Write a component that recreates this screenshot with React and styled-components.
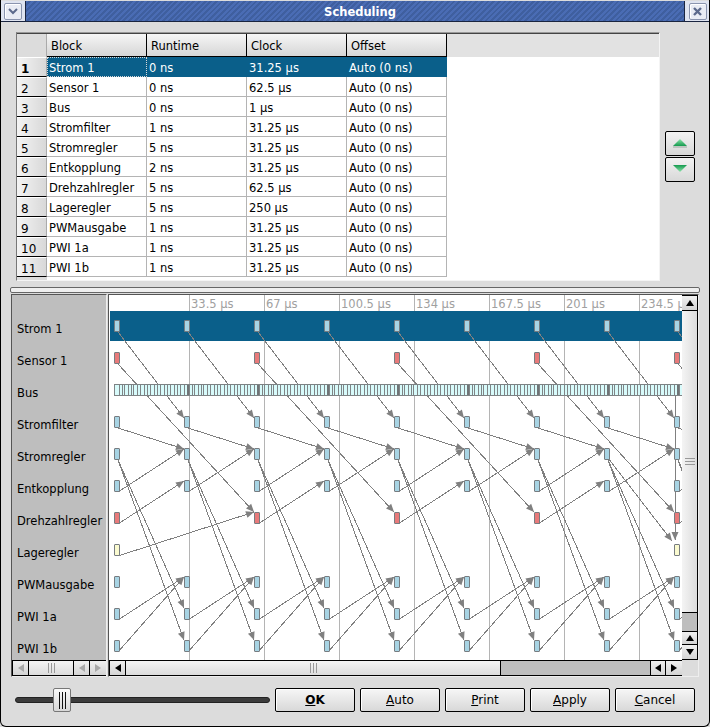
import React from 'react';
import styled, { createGlobalStyle } from 'styled-components';

const Global = createGlobalStyle`
  html, body { margin: 0; padding: 0; background: #dcdcdc; }
  body { font-family: "DejaVu Sans", sans-serif; font-size: 11.5px; color: #000; }
`;

const Window = styled.div`
  position: relative; box-sizing: border-box; width: 710px; height: 727px; overflow: hidden;
  background: #dcdcdc; display: flex; flex-direction: column;
  border: 1px solid #000; border-top: none; border-radius: 0 0 6px 6px;
`;
const TitleBar = styled.div`
  flex: none; height: 21px; box-sizing: border-box; margin: 1px -1px 0; display: flex; align-items: stretch;
  border-bottom: 1px solid #1a2540;
`;
const TitleStripes = styled.div`
  flex: 1; display: flex; align-items: center; justify-content: center; padding: 2px 0 0 10px;
  color: #fff; font-weight: bold; font-size: 11.5px;
  background: repeating-linear-gradient(135deg, #4a6cb4 0 2px, #3f5f9f 2px 4px);
  border-left: 1px solid #1a2540; border-right: 1px solid #1a2540;
`;
const WinBtnWrap = styled.div`
  width: ${p => p.$w}px; background: #dfe4f0; display: flex; align-items: center; justify-content: center;
`;
const WinBtn = styled.div`
  width: 16px; height: 15px; border: 1px solid #8a94ae; border-radius: 2px; background: #e9ecf4;
  display: flex; align-items: center; justify-content: center; box-shadow: inset 1px 1px 0 #fff;
`;
const Body = styled.div`
  flex: 1; display: flex; flex-direction: column; padding: 10px 10px 0 10px; min-height: 0;
`;
const TopRow = styled.div`
  display: flex; height: 249px; flex: none; padding-left: 5px;
`;
const TableFrame = styled.div`
  box-sizing: border-box; width: 644px; height: 249px; background: #fff; padding-top: 1px;
  border-top: 1px solid #999; box-shadow: inset 0 1px 0 #444;
  border-left: 1px solid #777; border-right: 1px solid #f4f4f4; border-bottom: 1px solid #f4f4f4;
`;
const HeadRow = styled.div`
  display: flex; height: 23px; background: #e2e2e2;
`;
const Corner = styled.div` box-sizing: border-box; width: 30px; background: #dcdcdc; border-right: 1px solid #aaa; `;
const HeadCell = styled.div`
  box-sizing: border-box; width: 100px; height: 23px; padding: 3px 4px 0 4px; line-height: 18px;
  background: linear-gradient(#f6f6f6, #d6d6d6); border-right: 1px solid #000; border-bottom: 1px solid #000;
`;
const Row = styled.div` display: flex; height: 20px; `;
const RowHead = styled.div`
  box-sizing: border-box; width: 30px; height: 20px; padding: 2px 0 0 4px; line-height: 18px; font-size: 12px;
  background: linear-gradient(90deg, #f4f4f4, #d8d8d8);
  border-top: 1px solid #fff; border-bottom: 1px solid #000; border-right: 1px solid #aaa;
  font-weight: ${p => p.$sel ? 'bold' : 'normal'};
`;
const Cell = styled.div`
  box-sizing: border-box; width: 100px; height: 20px; padding: 2px 0 0 2px; line-height: 19px; white-space: nowrap;
  border-right: 1px solid ${p => p.$sel ? '#0a5f8a' : '#b4b4b4'};
  border-bottom: 1px solid ${p => p.$sel ? '#0a5f8a' : '#b4b4b4'};
  background: ${p => p.$sel ? '#0a5f8a' : '#fff'}; color: ${p => p.$sel ? '#fff' : '#000'};
  ${p => p.$focus ? 'outline: 1px dotted #d8d8d8; outline-offset: -1px;' : ''}
`;
const TableFoot = styled.div` display: flex; height: 3px; `;
const FootCorner = styled.div` width: 30px; height: 3px; background: #dcdcdc; `;
const SideButtons = styled.div`
  display: flex; flex-direction: column; gap: 1px; padding: 99px 0 0 5px;
`;
const SideBtn = styled.div`
  box-sizing: border-box; width: 30px; height: 25px; display: flex; align-items: center; justify-content: center;
  border: 1px solid #000; border-radius: 2px; background: linear-gradient(#f2f2f2, #d8d8d8);
`;
const Splitter = styled.div`
  flex: none; box-sizing: border-box; height: 6px; margin: 6px 2px 1px -1px; width: 690px;
  background: #efefef; border: 1px solid #666; border-radius: 2px;
`;
const Split = styled.div`
  flex: none; display: flex; height: 383px; gap: 1px;
`;
const LeftPane = styled.div`
  box-sizing: border-box; width: 96px; height: 383px; display: flex; flex-direction: column;
  border: 1px solid #555; border-right-color: #eee; border-bottom-color: #eee; background: #bebebe;
`;
const Labels = styled.div`
  flex: 1; min-height: 0; padding-top: 18px; overflow: hidden;
`;
const Label = styled.div`
  height: 32px; line-height: 32px; padding-left: 5px; white-space: nowrap;
`;
const RightPane = styled.div`
  box-sizing: border-box; width: 591px; height: 383px; display: grid;
  grid-template-columns: 573px 16px; grid-template-rows: 365px 16px;
  border-left: 1px solid #555; border-top: 1px solid #555; border-right: 1px solid #eee; border-bottom: 1px solid #eee;
`;
const Chart = styled.div` width: 573px; height: 365px; background: #fff; overflow: hidden; `;
const HBar = styled.div`
  box-sizing: border-box; height: 16px; display: flex; background: #bebebe;
  border: 1px solid #000; border-right: none; ${p => p.$left ? 'border-right: 1px solid #000;' : ''}
`;
const VBar = styled.div`
  box-sizing: border-box; width: 16px; height: 365px; display: flex; flex-direction: column; background: #bebebe;
  border: 1px solid #000; border-left: none;
`;
const ArrowBtn = styled.div`
  box-sizing: border-box; flex: none; display: flex; align-items: center; justify-content: center;
  width: ${p => p.$v ? '100%' : '16px'}; height: ${p => p.$v ? '14px' : '100%'};
  background: linear-gradient(#f0f0f0, #d4d4d4);
  ${p => p.$v ? 'border-bottom: 1px solid #000;' : 'border-right: 1px solid #000;'}
  ${p => p.$top ? 'height: 15px;' : ''}
  ${p => p.$lead ? (p.$v ? 'border-top: 1px solid #000;' : 'border-left: 1px solid #000;') : ''}
  ${p => p.$last ? (p.$v ? 'border-bottom: none;' : 'border-right: none;') : ''}
`;
const Thumb = styled.div`
  box-sizing: border-box; flex: none; display: flex; align-items: center; justify-content: center;
  width: ${p => p.$v ? '100%' : `${p.$size}px`}; height: ${p => p.$v ? `${p.$size}px` : '100%'};
  background: ${p => p.$v ? 'linear-gradient(90deg, #f4f4f4, #dcdcdc)' : 'linear-gradient(#f4f4f4, #dcdcdc)'};
  ${p => p.$v ? 'border-bottom: 1px solid #000;' : 'border-right: 1px solid #000;'}
`;
const Spacer = styled.div` flex: 1; `;
const Grip = styled.div`
  display: flex; flex-direction: ${p => p.$v ? 'column' : 'row'}; gap: 2px;
  & > i { display: block; background: #999; width: ${p => p.$v ? '10px' : '1px'}; height: ${p => p.$v ? '1px' : '10px'}; }
`;
const CornerFill = styled.div` background: #dcdcdc; `;
const Footer = styled.div`
  flex: none; display: flex; align-items: center; padding: 11px 4px 0 4px;
`;
const SliderBox = styled.div`
  position: relative; width: 255px; height: 24px; margin-right: 5px; display: flex; align-items: center;
`;
const Groove = styled.div`
  width: 100%; height: 6px; box-sizing: border-box; border-radius: 3px; background: #3c3c3c; border: 1px solid #222;
`;
const SliderThumb = styled.div`
  position: absolute; left: 38px; top: 0; box-sizing: border-box; width: 18px; height: 24px; display: flex;
  align-items: center; justify-content: center; gap: 2px;
  background: linear-gradient(#fafafa, #d8d8d8); border: 1px solid #777; border-radius: 2px;
  & > i { display: block; width: 1px; height: 17px; background: #111; }
`;
const Buttons = styled.div` display: flex; gap: 5px; `;
const Btn = styled.div`
  box-sizing: border-box; width: 80px; height: 24px; display: flex; align-items: center; justify-content: center;
  background: linear-gradient(#f6f6f6, #d8d8d8); border: 1px solid #000; border-radius: 2px;
  font-size: 12px; font-weight: ${p => p.$def ? 'bold' : 'normal'};
  box-shadow: inset 1px 1px 0 #fff;
  & u { text-decoration: underline; }
`;

const columns = ['Block', 'Runtime', 'Clock', 'Offset'];
const rows = [
  ['Strom 1', '0 ns', '31.25 µs'], ['Sensor 1', '0 ns', '62.5 µs'], ['Bus', '0 ns', '1 µs'],
  ['Stromfilter', '1 ns', '31.25 µs'], ['Stromregler', '5 ns', '31.25 µs'], ['Entkopplung', '2 ns', '31.25 µs'],
  ['Drehzahlregler', '5 ns', '62.5 µs'], ['Lageregler', '5 ns', '250 µs'], ['PWMausgabe', '1 ns', '31.25 µs'],
  ['PWI 1a', '1 ns', '31.25 µs'], ['PWI 1b', '1 ns', '31.25 µs'],
];
const labels = ['Strom 1', 'Sensor 1', 'Bus', 'Stromfilter', 'Stromregler', 'Entkopplung', 'Drehzahlregler', 'Lageregler', 'PWMausgabe', 'PWI 1a', 'PWI 1b'];

// chart origin on the page
const OX = 109, OY = 295;
const X = v => v - OX, Y = v => v - OY;
const ticks = ['33.5 µs', '67 µs', '100.5 µs', '134 µs', '167.5 µs', '201 µs', '234.5 µs'];
const slots = [0, 1, 2, 3, 4, 5, 6, 7, 8].map(k => 114 + 70 * k);
const rowTop = i => 320 + 32 * i;
const busOffsets = [0, 5, 8, 10, 14, 17, 19, 23, 26, 30, 33, 36, 40, 43, 46, 50, 53, 56, 60, 63, 66];

const Block = ({ x, y, fill }) => (
  <rect x={X(x) + 0.5} y={Y(y) + 0.5} width={5} height={11} rx={0.5} fill={fill} stroke="#777c80" />
);
const Link = ({ a, b, c, d, head }) => {
  const x1 = X(a), y1 = Y(b), x2 = X(c), y2 = Y(d);
  const ang = Math.atan2(y2 - y1, x2 - x1);
  const L = 8, W = 3.5;
  const bx = x2 - L * Math.cos(ang), by = y2 - L * Math.sin(ang);
  const nx = -Math.sin(ang) * W, ny = Math.cos(ang) * W;
  return (
    <g>
      <line x1={x1} y1={y1} x2={x2} y2={y2} stroke="#808080" strokeWidth="1" shapeRendering="crispEdges" />
      {head && <polygon points={`${x2},${y2} ${bx + nx},${by + ny} ${bx - nx},${by - ny}`} fill="#808080" />}
    </g>
  );
};

const ChartDrawing = () => {
  const links = [];
  slots.forEach((s, k) => {
    const sx = s + 4;
    const t = s + 70; // next slot
    links.push([sx, 332, t, 418]);
    links.push([sx, 428, t, 449]);
    links.push([sx, 460, t, 608]);
    links.push([sx, 460, t, 640]);
    links.push([sx, 492, t, 449]);
    links.push([sx, 620, t, 577]);
    links.push([sx, 652, t, 577]);
    if (k % 2 === 0) {
      links.push([sx, 524, t, 481]);
      links.push([sx, 364, s + 140, 512]);
    }
  });
  links.push([118, 556, 254, 512]);
  links.push([608, 458, 672, 541]);
  links.push([675, 396, 675, 540]);
  const bus = [];
  for (let k = 0; k < 9; k++) busOffsets.forEach(o => { if (114 + 70 * k + o < 681) bus.push(114 + 70 * k + o); });
  return (
    <svg width="573" height="365" viewBox="0 0 573 365" style={{ display: 'block' }} fontFamily="DejaVu Sans" fontSize="11.5">
      <rect x={X(110)} y={Y(311)} width={573} height={30} fill="#0a5f8a" />
      {ticks.map((t, i) => (
        <g key={t}>
          <line x1={X(189 + 75 * i) + 0.5} y1={Y(295)} x2={X(189 + 75 * i) + 0.5} y2={Y(311)} stroke="#b4b4b4" />
          <line x1={X(189 + 75 * i) + 0.5} y1={Y(341)} x2={X(189 + 75 * i) + 0.5} y2={365} stroke="#b4b4b4" />
          <text x={X(191 + 75 * i)} y={Y(308)} fill="#a0a0a0">{t}</text>
        </g>
      ))}
      {links.map((l, i) => <Link key={i} a={l[0]} b={l[1]} c={l[2]} d={l[3]} head={l[1] > 400 || l[3] > 400} />)}
      <rect x={X(114) + 0.5} y={Y(384) + 0.5} width={568} height={11} fill="#d8fbfb" stroke="#7d8284" />
      {bus.map(x => <line key={x} x1={X(x) + 0.5} y1={Y(385)} x2={X(x) + 0.5} y2={Y(395)} stroke="#808486" />)}
      {[0, 1, 2, 3, 4, 5, 6, 7].map(k => <rect key={k} x={X(187 + 70 * k)} y={Y(385)} width={2} height={10} fill="#6f7476" />)}
      {slots.map((s, k) => (
        <g key={s}>
          {[0, 3, 4, 5, 8, 9, 10].map(r => <Block key={r} x={s} y={rowTop(r)} fill="#a8d4e4" />)}
          {k % 2 === 0 && <Block x={s} y={rowTop(1)} fill="#e87a7a" />}
          {k % 2 === 0 && <Block x={s} y={rowTop(6)} fill="#e87a7a" />}
          {(k === 0 || k === 8) && <Block x={s} y={rowTop(7)} fill="#fbfbd0" />}
        </g>
      ))}
    </svg>
  );
};

const Tri = ({ dir, color = '#000', size = 8 }) => {
  const p = { l: '0,4 6,0 6,8', r: '6,4 0,0 0,8', u: '4,0 0,6 8,6', d: '4,6 0,0 8,0' }[dir];
  const vb = dir === 'l' || dir === 'r' ? '0 0 6 8' : '0 0 8 6';
  const w = dir === 'l' || dir === 'r' ? 6 : size;
  const h = dir === 'l' || dir === 'r' ? size : 6;
  return <svg width={w} height={h} viewBox={vb}><polygon points={p} fill={color} /></svg>;
};
const GreenTri = ({ up }) => (
  <svg width="14" height="9" viewBox="0 0 14 9">
    <defs>
      <linearGradient id={up ? 'gu' : 'gd'} x1="0" y1="0" x2="0" y2="1">
        <stop offset="0" stopColor={up ? '#8fe4ac' : '#149a4e'} />
        <stop offset="1" stopColor={up ? '#149a4e' : '#8fe4ac'} />
      </linearGradient>
    </defs>
    <polygon points={up ? '7,0 14,7 0,7' : '0,0 14,0 7,7'} fill={`url(#${up ? 'gu' : 'gd'})`} />
    {up && <line x1="0" y1="8" x2="14" y2="8" stroke="#9aa89e" />}
  </svg>
);
const Three = ({ v }) => <Grip $v={v}><i /><i /><i /></Grip>;

export default function App() {
  return (
    <Window>
      <Global />
      <TitleBar>
        <WinBtnWrap $w={25}>
          <WinBtn>
            <svg width="10" height="7" viewBox="0 0 10 7"><path d="M1 1 L5 5 L9 1" fill="none" stroke="#5c6a8c" strokeWidth="2" /></svg>
          </WinBtn>
        </WinBtnWrap>
        <TitleStripes>Scheduling</TitleStripes>
        <WinBtnWrap $w={25}>
          <WinBtn>
            <svg width="9" height="9" viewBox="0 0 9 9"><path d="M1 1 L8 8 M8 1 L1 8" fill="none" stroke="#5c6a8c" strokeWidth="2.4" /></svg>
          </WinBtn>
        </WinBtnWrap>
      </TitleBar>
      <Body>
        <TopRow>
          <TableFrame>
            <HeadRow>
              <Corner />
              {columns.map(c => <HeadCell key={c}>{c}</HeadCell>)}
            </HeadRow>
            {rows.map((r, i) => (
              <Row key={r[0]}>
                <RowHead $sel={i === 0}>{i + 1}</RowHead>
                <Cell $sel={i === 0} $focus={i === 0}>{r[0]}</Cell>
                <Cell $sel={i === 0}>{r[1]}</Cell>
                <Cell $sel={i === 0}>{r[2]}</Cell>
                <Cell $sel={i === 0}>Auto (0 ns)</Cell>
              </Row>
            ))}
            <TableFoot><FootCorner /></TableFoot>
          </TableFrame>
          <SideButtons>
            <SideBtn><GreenTri up /></SideBtn>
            <SideBtn><GreenTri /></SideBtn>
          </SideButtons>
        </TopRow>
        <Splitter />
        <Split>
          <LeftPane>
            <Labels>{labels.map(l => <Label key={l}>{l}</Label>)}</Labels>
            <HBar $left>
              <ArrowBtn><Tri dir="l" color="#a8a8a8" /></ArrowBtn>
              <Thumb $size={45}><Three /></Thumb>
              <Spacer />
              <ArrowBtn><Tri dir="l" color="#a8a8a8" /></ArrowBtn>
              <ArrowBtn $last><Tri dir="r" color="#a8a8a8" /></ArrowBtn>
            </HBar>
          </LeftPane>
          <RightPane>
            <Chart><ChartDrawing /></Chart>
            <VBar>
              <ArrowBtn $v $top><Tri dir="u" /></ArrowBtn>
              <Thumb $v $size={302}><Three v /></Thumb>
              <Spacer />
              <ArrowBtn $v $lead><Tri dir="u" /></ArrowBtn>
              <ArrowBtn $v $last><Tri dir="d" /></ArrowBtn>
            </VBar>
            <HBar>
              <ArrowBtn><Tri dir="l" /></ArrowBtn>
              <Thumb $size={375}><Three /></Thumb>
              <Spacer />
              <ArrowBtn $lead><Tri dir="l" /></ArrowBtn>
              <ArrowBtn $last><Tri dir="r" /></ArrowBtn>
            </HBar>
            <CornerFill />
          </RightPane>
        </Split>
        <Footer>
          <SliderBox>
            <Groove />
            <SliderThumb><i /><i /><i /></SliderThumb>
          </SliderBox>
          <Buttons>
            <Btn $def><span><u>O</u>K</span></Btn>
            <Btn><span><u>A</u>uto</span></Btn>
            <Btn><span><u>P</u>rint</span></Btn>
            <Btn><span><u>A</u>pply</span></Btn>
            <Btn><span><u>C</u>ancel</span></Btn>
          </Buttons>
        </Footer>
      </Body>
    </Window>
  );
}
